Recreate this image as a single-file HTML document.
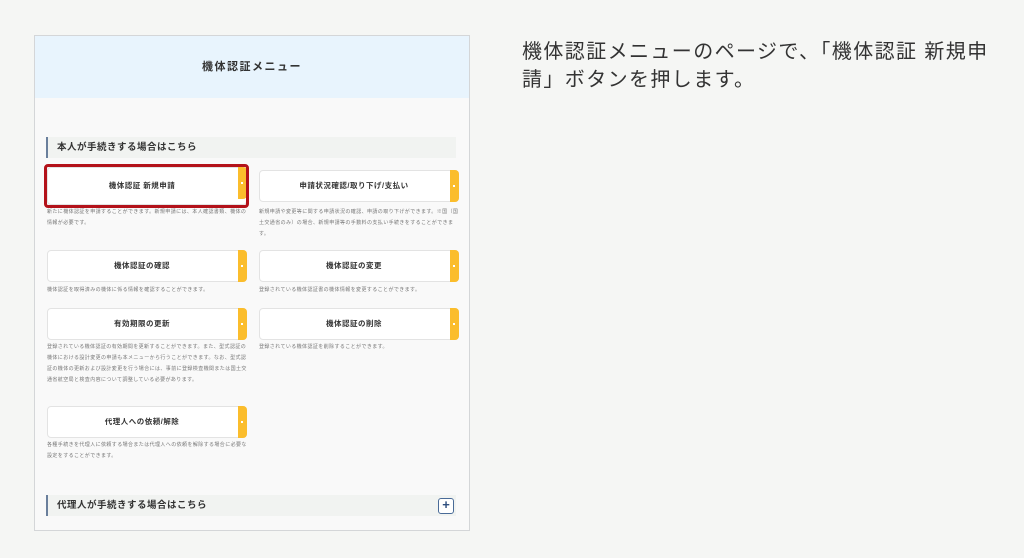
<!DOCTYPE html>
<html><head><meta charset="utf-8"><style>
*{margin:0;padding:0;box-sizing:border-box}
body{width:1024px;height:558px;background:#f5f6f4;position:relative;overflow:hidden;font-family:"Liberation Sans","Noto Sans CJK JP",sans-serif}
.panel{position:absolute;left:34px;top:35px;width:436px;height:496px;background:#f9f9f9;border:1px solid #d4d6d8}
.hdr{position:absolute;left:0;top:0;width:100%;height:62px;background:#e8f4fd;text-align:center;font-size:11px;font-weight:bold;line-height:62px;color:#333;letter-spacing:1.5px}
.sec{position:absolute;left:11px;width:410px;height:21px;background:#f1f3f1;border-left:2px solid #6a7f9c;font-size:9.5px;font-weight:bold;color:#333;line-height:21px;padding-left:9px;letter-spacing:.5px}
.btn{position:absolute;width:200px;height:32px;background:#fff;border:1px solid #e3e3e3;border-radius:4px;font-size:7.5px;font-weight:bold;color:#333;text-align:center;line-height:30px;padding-right:10px;letter-spacing:.5px}
.btn:after{content:"";position:absolute;right:-1px;top:-1px;width:9px;height:32px;background:#fbbd2c;border-radius:0 4px 4px 0}
.btn:before{content:"";position:absolute;right:3px;top:14px;width:2px;height:2px;background:#fff;z-index:2}
.d{position:absolute;width:200px;font-size:5px;line-height:11px;color:#777;letter-spacing:.4px}
.red{position:absolute;left:9px;top:128px;width:205px;height:44px;border:3px solid #b3121a;border-radius:4px}
.plus{position:absolute;left:403px;top:462px;width:16px;height:16px;border:1.5px solid #4a6b98;border-radius:3px;background:#fff;color:#2f4f7f;font-size:13px;line-height:12px;text-align:center;font-weight:bold}
.txt{position:absolute;left:522px;top:38px;font-size:20px;line-height:28px;color:#333;white-space:nowrap;letter-spacing:1.4px}
</style></head><body>
<div class="panel">
<div class="hdr">機体認証メニュー</div>
<div class="sec" style="top:101px">本人が手続きする場合はこちら</div>
<div class="btn" style="left:12px;top:131px;height:38px;line-height:36px">機体認証 新規申請</div>
<div class="btn" style="left:224px;top:134px">申請状況確認/取り下げ/支払い</div>
<div class="red"></div>
<div class="d" style="left:12px;top:171px">新たに機体認証を申請することができます。新規申請には、本人確認書類、機体の情報が必要です。</div>
<div class="d" style="left:224px;top:171px">新規申請や変更等に関する申請状況の確認、申請の取り下げができます。※国（国土交通省のみ）の場合、新規申請等の手数料の支払い手続きをすることができます。</div>
<div class="btn" style="left:12px;top:214px">機体認証の確認</div>
<div class="btn" style="left:224px;top:214px">機体認証の変更</div>
<div class="d" style="left:12px;top:249px">機体認証を取得済みの機体に係る情報を確認することができます。</div>
<div class="d" style="left:224px;top:249px">登録されている機体認証書の機体情報を変更することができます。</div>
<div class="btn" style="left:12px;top:272px">有効期限の更新</div>
<div class="btn" style="left:224px;top:272px">機体認証の削除</div>
<div class="d" style="left:12px;top:306px">登録されている機体認証の有効期間を更新することができます。また、型式認証の機体における設計変更の申請も本メニューから行うことができます。なお、型式認証の機体の更新および設計変更を行う場合には、事前に登録検査機関または国土交通省航空局と検査内容について調整している必要があります。</div>
<div class="d" style="left:224px;top:306px">登録されている機体認証を削除することができます。</div>
<div class="btn" style="left:12px;top:370px">代理人への依頼/解除</div>
<div class="d" style="left:12px;top:404px">各種手続きを代理人に依頼する場合または代理人への依頼を解除する場合に必要な設定をすることができます。</div>
<div class="sec" style="top:459px">代理人が手続きする場合はこちら</div>
<div class="plus">+</div>
</div>
<div class="txt">機体認証メニューのページで、「機体認証 新規申<br>請」ボタンを押します。</div>
</body></html>
